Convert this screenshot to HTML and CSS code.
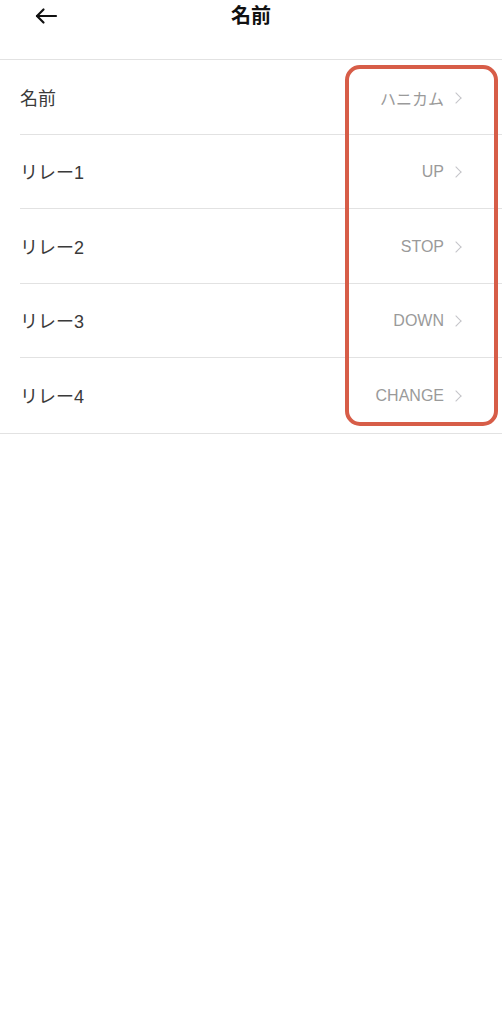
FILE: index.html
```html
<!DOCTYPE html>
<html lang="ja">
  <head>
    <meta charset="UTF-8" />
    <meta name="viewport" content="width=device-width, initial-scale=1.0" />
    <title>名前</title>
    <link rel="stylesheet" href="styles.css">
  </head>
  <body>
    <header class="topbar">
      <button class="back" aria-label="戻る">
        <svg width="24" height="18" viewBox="0 0 24 18" fill="none" stroke="#111" stroke-width="2.2" stroke-linecap="round" stroke-linejoin="round">
          <path d="M22 9H3" />
          <path d="M9.5 2.5L3 9l6.5 6.5" />
        </svg>
      </button>
      <h1 class="title">名前</h1>
    </header>

    <main class="settings">
      <ul class="list">
        <li class="row">
          <span class="label">名前</span>
          <span class="value">ハニカム<span class="chevron"></span></span>
        </li>
        <li class="row">
          <span class="label">リレー1</span>
          <span class="value">UP<span class="chevron"></span></span>
        </li>
        <li class="row">
          <span class="label">リレー2</span>
          <span class="value">STOP<span class="chevron"></span></span>
        </li>
        <li class="row">
          <span class="label">リレー3</span>
          <span class="value">DOWN<span class="chevron"></span></span>
        </li>
        <li class="row">
          <span class="label">リレー4</span>
          <span class="value">CHANGE<span class="chevron"></span></span>
        </li>
      </ul>
      <!-- annotation box drawn over the values column -->
      <div class="highlight"></div>
    </main>
  </body>
</html>
```

FILE: styles.css
```css
*,
*::before,
*::after {
  box-sizing: border-box;
}

body {
  margin: 0;
  background: #fff;
  color: #333;
  font-family: "Liberation Sans", "Noto Sans CJK JP", sans-serif;
}

.topbar {
  position: relative;
  height: 60px;
  border-bottom: 1px solid #e2e2e2;
}

.back {
  position: absolute;
  left: 34px;
  top: 7px;
  padding: 0;
  border: 0;
  background: none;
  display: flex;
}

.title {
  margin: 0;
  padding-top: 3px;
  text-align: center;
  font-size: 20px;
  line-height: 26px;
  font-weight: bold;
  color: #111;
}

.settings {
  position: relative;
}

.list {
  list-style: none;
  margin: 0;
  padding: 0;
  border-bottom: 1px solid #e2e2e2;
}

.row {
  display: flex;
  align-items: center;
  justify-content: space-between;
  height: 74.5px;
  margin-left: 20px;
  padding-right: 40px;
  border-bottom: 1px solid #e2e2e2;
}

.row:last-child {
  border-bottom: 0;
}

.label {
  font-size: 18px;
  color: #3a3a3a;
}

.value {
  display: flex;
  align-items: center;
  gap: 8px;
  padding-top: 2px;
  font-size: 16px;
  color: #9a9a9a;
}

.chevron {
  width: 8px;
  height: 8px;
  border-top: 1.5px solid #c4c4c8;
  border-right: 1.5px solid #c4c4c8;
  transform: rotate(45deg);
  margin-right: 2px;
}

.highlight {
  position: absolute;
  left: 345px;
  top: 5px;
  width: 153px;
  height: 361px;
  border: 4px solid #d75d48;
  border-radius: 15px;
}
```
